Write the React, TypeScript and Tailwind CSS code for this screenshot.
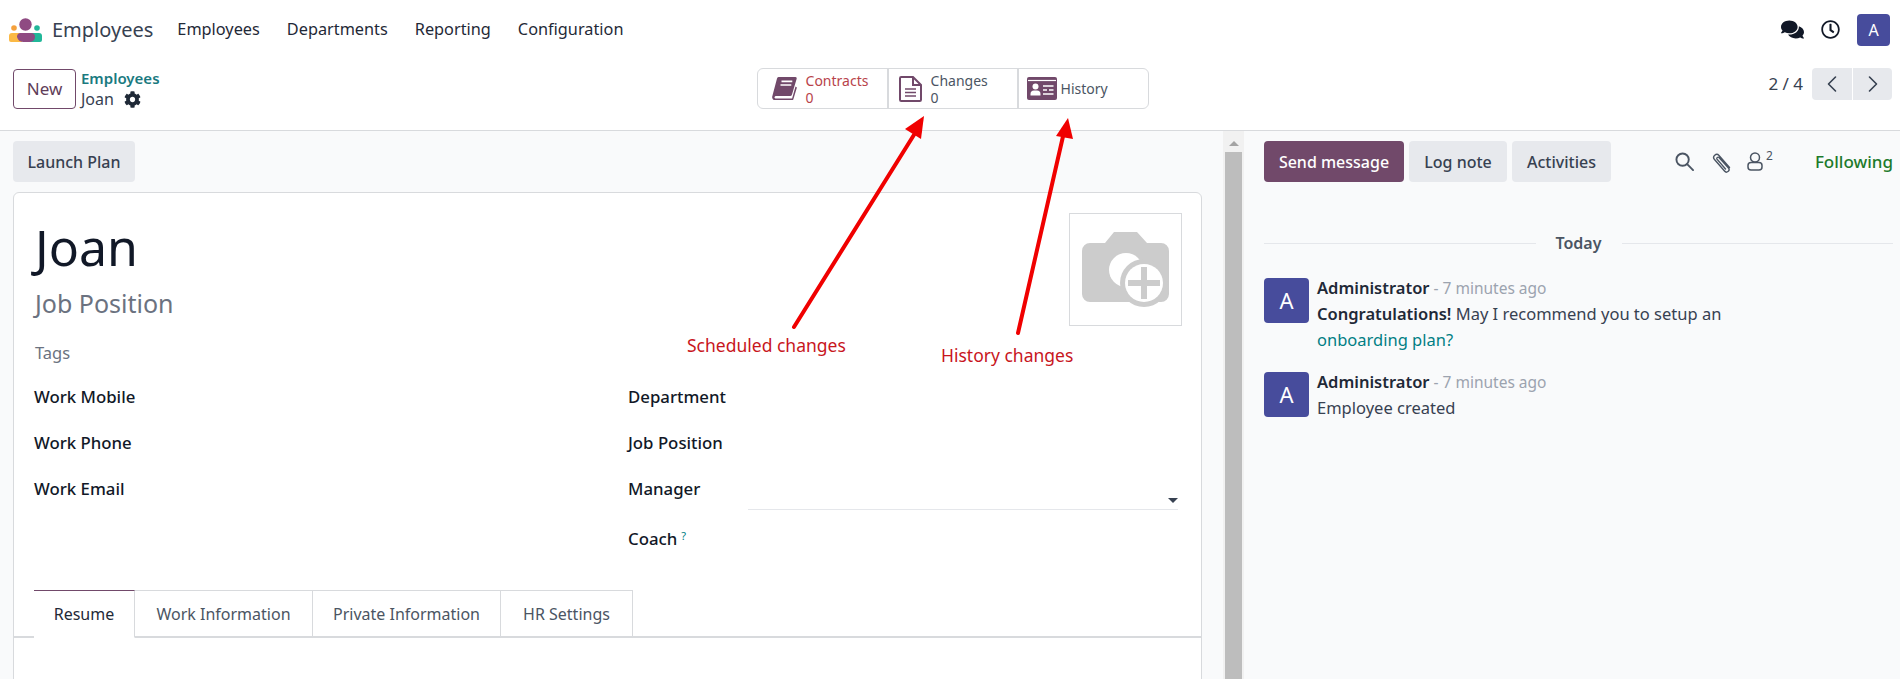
import { ChevronLeft, ChevronRight } from "lucide-react";
import { FaCog, FaComments, FaRegClock } from "react-icons/fa";

const menu = ["Employees", "Departments", "Reporting", "Configuration"];
const tabs = [
  { label: "Resume", width: "w-[101px]" },
  { label: "Work Information", width: "w-[178px]" },
  { label: "Private Information", width: "w-[188px]" },
  { label: "HR Settings", width: "w-[132px]" },
];

function Logo() {
  return (
    <svg viewBox="0 0 33 24" className="h-[24px] w-[33px]">
      <circle cx="5" cy="10" r="2.8" fill="#f5a13c" />
      <circle cx="28" cy="10" r="2.8" fill="#21b799" />
      <path d="M3 15h10v9H2a2 2 0 0 1-2-2v-4a3 3 0 0 1 3-3z" fill="#fbb945" />
      <path d="M20 15h10a3 3 0 0 1 3 3v4a2 2 0 0 1-2 2H20z" fill="#21b799" />
      <circle cx="16.5" cy="6.5" r="6.2" fill="#8f4a82" />
      <path d="M11 15h11a4 4 0 0 1 4 4 5 5 0 0 1-5 5h-6a7 7 0 0 1-7-5 4 4 0 0 1 3-4z" fill="#8f4a82" />
    </svg>
  );
}

function CameraPlaceholder() {
  return (
    <svg viewBox="0 0 87 75" className="h-[75px] w-[87px]">
      <path
        d="M8 11h15L32 0h23l10 11h14a8 8 0 0 1 8 8v43a8 8 0 0 1-8 8H8a8 8 0 0 1-8-8V19a8 8 0 0 1 8-8z"
        fill="#cccccc"
      />
      <circle cx="44" cy="38" r="17" fill="#ffffff" />
      <circle cx="62" cy="51" r="24" fill="#cccccc" />
      <circle cx="62" cy="51" r="19" fill="#ffffff" />
      <path d="M59 35h6v13h13v6H65v13h-6V54H46v-6h13z" fill="#cccccc" />
    </svg>
  );
}

/* ---------- STAT BUTTON ICONS ---------- */
function BookIcon() {
  return (
    <svg viewBox="0 0 25 23" className="h-[23px] w-[25px] shrink-0">
      <path d="M6.5 0H23a1.6 1.6 0 0 1 1.6 2L20 17.5a2 2 0 0 1-2 1.5H4a1.6 1.6 0 0 0-1.5 1.2A1 1 0 0 0 3.5 21.4h16.6l3.4-12 1.4 1-3.6 12a1.6 1.6 0 0 1-1.6.8H3A3 3 0 0 1 .3 19.3L5 1.4A1.8 1.8 0 0 1 6.5 0z" fill="#71496a" />
      <path d="M9.5 4.4h10.8M8.5 8h10.8" stroke="#ffffff" strokeWidth="1.6" />
    </svg>
  );
}

function FileIcon() {
  return (
    <svg viewBox="0 0 23 26" className="h-[26px] w-[23px] shrink-0" fill="none" stroke="#71496a">
      <path d="M1 2.2A1.2 1.2 0 0 1 2.2 1H14l8 8v14.8a1.2 1.2 0 0 1-1.2 1.2H2.2A1.2 1.2 0 0 1 1 23.8z" strokeWidth="2" />
      <path d="M14 1v8h8" strokeWidth="2" />
      <path d="M6 13h11M6 16.5h11M6 20h11" strokeWidth="1.6" />
    </svg>
  );
}

function CardIcon() {
  return (
    <svg viewBox="0 0 30 23" className="h-[23px] w-[30px] shrink-0">
      <rect x="0" y="0" width="30" height="23" rx="2" fill="#71496a" />
      <path d="M1 3.5h28" stroke="#ffffff" strokeWidth="1.2" />
      <circle cx="8.5" cy="9.5" r="3" fill="#ffffff" />
      <path d="M3.5 18.5V17A3.5 3.5 0 0 1 7 13.5h3a3.5 3.5 0 0 1 3.5 3.5v1.5z" fill="#ffffff" />
      <path d="M16 9h10.5M16 13h4M22 13h4.5M16 17h10.5" stroke="#ffffff" strokeWidth="1.5" />
    </svg>
  );
}

/* ---------- CHATTER ICONS ---------- */
function SearchIcon() {
  return (
    <svg viewBox="0 0 20 20" className="h-[19px] w-[19px]" fill="none" stroke="#4b5563" strokeWidth="2">
      <circle cx="8" cy="8" r="6.5" />
      <path d="M12.8 12.8 19 19" strokeLinecap="round" />
    </svg>
  );
}

function ClipIcon() {
  return (
    <svg viewBox="0 0 20 22" className="h-[22px] w-[20px]" fill="none" stroke="#4b5563" strokeWidth="1.4" strokeLinecap="round">
      <path d="M17.5 16.5 7 4.500a3 3 0 0 0-4.500 4L12.500 20a2.300 2.300 0 0 0 4-3L7 6.500a1.300 1.300 0 0 0-2 1.600l8.500 9.900" />
    </svg>
  );
}

function FollowerIcon() {
  return (
    <svg viewBox="0 0 16 19" className="h-[19px] w-[16px]" fill="none" stroke="#4b5563" strokeWidth="1.5">
      <circle cx="8" cy="5.5" r="4.5" />
      <rect x="1" y="10.5" width="14" height="7.5" rx="3" />
    </svg>
  );
}

function Annotations() {
  return (
    <>
      <svg className="pointer-events-none absolute left-0 top-0 h-[679px] w-[1900px]" viewBox="0 0 1900 679">
        <line x1="794" y1="327" x2="917" y2="130" stroke="#f00000" strokeWidth="4" strokeLinecap="round" />
        <polygon points="924,116 921,139 905,129" fill="#f00000" />
        <line x1="1018" y1="333" x2="1064" y2="132" stroke="#f00000" strokeWidth="4" strokeLinecap="round" />
        <polygon points="1068,118 1073,139 1056,136" fill="#f00000" />
      </svg>
      <span className="absolute left-[687px] top-[333px] text-[17.5px] leading-[24px] text-[#c8161d]">Scheduled changes</span>
      <span className="absolute left-[941px] top-[343px] text-[17.5px] leading-[24px] text-[#c8161d]">History changes</span>
    </>
  );
}

function Message({ children }: { children: React.ReactNode }) {
  return (
    <div className="flex gap-[8px]">
      <div className="flex h-[45px] w-[45px] shrink-0 items-center justify-center rounded-[4px] bg-[#474c9c] text-[22px] text-white">
        A
      </div>
      <div className="-mt-[3px] text-[16.5px] leading-[26px] text-[#374151]">
        <div>
          <span className="font-semibold text-[#1f2937]">Administrator</span>
          <span className="text-[15.5px] text-[#9ca3af]"> - 7 minutes ago</span>
        </div>
        {children}
      </div>
    </div>
  );
}

function Field({ label, tip }: { label: string; tip?: boolean }) {
  return (
    <div className="h-[46px] text-[16.8px] font-medium leading-[24px] text-[#111827]">
      {label}
      {tip && <sup className="ml-[4px] text-[11px] font-normal text-[#017e84]">?</sup>}
    </div>
  );
}

export default function App() {
  return (
    <div className="relative h-[679px] w-[1900px] overflow-hidden bg-white font-['Noto_Sans',sans-serif] text-[#374151]">
      {/* NAVBAR */}
      <header className="flex h-[50px] items-center pl-[9px] pr-[10px] pt-[9px]">
        <Logo />
        <span className="ml-[10px] text-[20px] text-[#374151]">Employees</span>
        <nav className="ml-[24px] flex gap-[27px] text-[16.3px] text-[#1f2937]">
          {menu.map(item => (
            <span key={item}>{item}</span>
          ))}
        </nav>
        <div className="ml-auto flex items-center">
          <FaComments className="text-[23px] text-[#111827]" />
          <FaRegClock className="ml-[17px] text-[19px] text-[#111827]" />
          <div className="ml-[17px] flex h-[32px] w-[33px] items-center justify-center rounded-[4px] bg-[#474c9c] text-[16px] text-white">
            A
          </div>
        </div>
      </header>

      {/* CONTROL PANEL */}
      <div className="relative flex h-[81px] items-start border-b border-[#d8dadd] pl-[13px] pr-[8px] pt-[18px]">
        <button className="mt-[1px] h-[40px] w-[63px] rounded-[4px] border border-[#71496a] text-[17px] text-[#5f3d59]">
          New
        </button>
        <div className="ml-[5px] mt-[1px] text-[16px] leading-[21px]">
          <div className="-mt-[1px] text-[15px] font-semibold text-[#1a7a7f]">Employees</div>
          <div className="flex items-center gap-[10px] text-[#374151]">
            Joan <FaCog className="text-[17px] text-[#1f2937]" />
          </div>
        </div>

        <div className="ml-[597px] flex h-[41px] w-[392px] rounded-[6px] border border-[#d8dadd] text-[14px] leading-[17px]">
          <div className="flex w-[131px] items-center gap-[9px] border-r-2 border-[#d8dadd] pl-[14px] text-[#b8434a]">
            <BookIcon />
            <div>
              Contracts
              <br />0
            </div>
          </div>
          <div className="flex w-[130px] items-center gap-[9px] border-r-2 border-[#d8dadd] pl-[10px] text-[#4b5563]">
            <FileIcon />
            <div>
              Changes
              <br />0
            </div>
          </div>
          <div className="flex flex-1 items-center gap-[4px] pl-[8px] text-[#4b5563]">
            <CardIcon />
            History
          </div>
        </div>

        <div className="ml-auto flex items-center">
          <span className="mr-[9px] -mt-[1px] text-[17px]">2 / 4</span>
          <button className="flex h-[32px] w-[40px] items-center justify-center rounded-l-[4px] bg-[#e7e9ed] text-[#374151]">
            <ChevronLeft size={28} strokeWidth={1.4} />
          </button>
          <button className="ml-[1px] flex h-[32px] w-[39px] items-center justify-center rounded-r-[4px] bg-[#e7e9ed] text-[#374151]">
            <ChevronRight size={28} strokeWidth={1.4} />
          </button>
        </div>
      </div>

      <div className="flex h-[548px]">
        {/* FORM */}
        <main className="w-[1223px] shrink-0 bg-[#f9fafb] pl-[13px] pr-[21px] pt-[10px]">
          <button className="h-[41px] w-[122px] rounded-[4px] bg-[#e7e9ed] text-[16px] font-medium text-[#374151]">
            Launch Plan
          </button>
          <div className="mt-[10px] h-[600px] rounded-t-[6px] border border-[#d8dadd] bg-white">
            <div className="flex justify-between pl-[21px] pr-[19px] pt-[20px]">
              <div>
                <h1 className="text-[50px] leading-[68px] text-[#111827]">Joan</h1>
                <div className="mt-[5px] text-[25px] leading-[34px] text-[#6b7280]">Job Position</div>
                <div className="mt-[21px] text-[16.5px] leading-[24px] text-[#6b7280]">Tags</div>
              </div>
              <div className="flex h-[113px] w-[113px] items-center justify-center border border-[#d8dadd]">
                <CameraPlaceholder />
              </div>
            </div>

            <div className="mt-[20px] flex pl-[20px]">
              <div className="w-[594px]">
                <Field label="Work Mobile" />
                <Field label="Work Phone" />
                <Field label="Work Email" />
              </div>
              <div className="w-[550px]">
                <Field label="Department" />
                <Field label="Job Position" />
                <div className="flex h-[50px]">
                  <Field label="Manager" />
                  <div className="relative ml-[48px] h-[33px] flex-1 border-b border-[#e5e7eb]">
                    <span className="absolute right-[0px] top-[21px] border-x-[5px] border-t-[5px] border-x-transparent border-t-[#374151]" />
                  </div>
                </div>
                <Field label="Coach" tip />
              </div>
            </div>

            <div className="mt-[17px] flex h-[48px] border-b-2 border-[#d8dadd] pl-[20px]">
              {tabs.map((tab, i) => (
                <div
                  key={tab.label}
                  className={`flex h-[48px] items-center justify-center border border-l-0 border-[#d8dadd] text-[16px] ${tab.width} ${
                    i === 0
                      ? "border-l border-b-white border-t-[#71496a] bg-white text-[#1f2937]"
                      : "text-[#4b5563]"
                  }`}
                >
                  {tab.label}
                </div>
              ))}
            </div>
          </div>
        </main>

        {/* SCROLLBAR */}
        <div className="flex w-[21px] shrink-0 flex-col items-center bg-[#f1f1f1]">
          <span className="mt-[10px] border-x-[5px] border-b-[5px] border-x-transparent border-b-[#a3a3a3]" />
          <div className="mt-[6px] w-[17px] flex-1 bg-[#bdbdbd]" />
        </div>

        {/* CHATTER */}
        <aside className="flex-1 bg-[#f9fafb] pl-[20px] pr-[7px] pt-[10px]">
          <div className="flex items-center">
            <button className="h-[41px] w-[140px] rounded-[4px] bg-[#71496a] text-[16px] font-medium text-white">
              Send message
            </button>
            <button className="ml-[5px] h-[41px] w-[98px] rounded-[4px] bg-[#e7e9ed] text-[16px] font-medium">
              Log note
            </button>
            <button className="ml-[5px] h-[41px] w-[99px] rounded-[4px] bg-[#e7e9ed] text-[16px] font-medium">
              Activities
            </button>
            <span className="ml-[64px]"><SearchIcon /></span>
            <span className="ml-[18px]"><ClipIcon /></span>
            <span className="ml-[15px]"><FollowerIcon /></span>
            <sup className="ml-[3px] text-[12px] text-[#4b5563]">2</sup>
            <span className="ml-auto text-[17px] font-medium text-[#1d7a2b]">Following</span>
          </div>

          <div className="mt-[49px] flex items-center gap-[20px]">
            <div className="h-px flex-1 bg-[#e5e7eb]" />
            <span className="text-[16px] font-semibold leading-[24px] text-[#4b5563]">Today</span>
            <div className="h-px flex-1 bg-[#e5e7eb]" />
          </div>

          <div className="mt-[23px]">
            <Message>
              <div>
                <span className="font-semibold text-[#1f2937]">Congratulations!</span> May I recommend you to setup an
              </div>
              <div className="text-[#017e84]">onboarding plan?</div>
            </Message>
          </div>
          <div className="mt-[19px]">
            <Message>
              <div>Employee created</div>
            </Message>
          </div>
        </aside>
      </div>

      <Annotations />
    </div>
  );
}
